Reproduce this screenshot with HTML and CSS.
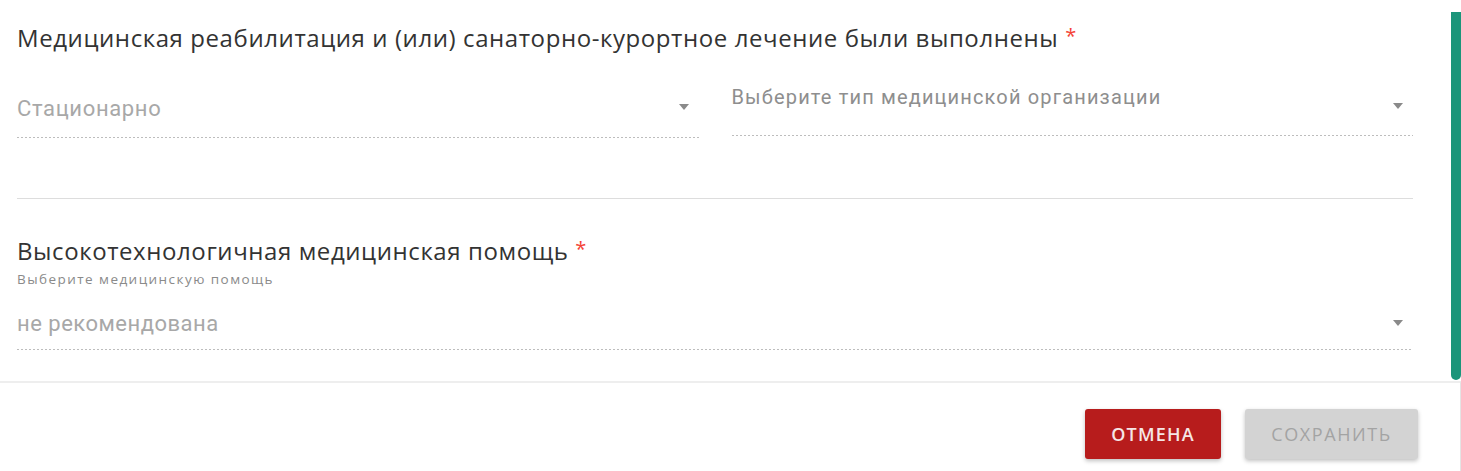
FILE: index.html
```html
<!DOCTYPE html>
<html lang="ru">
<head>
<meta charset="utf-8">
<link rel="stylesheet" href="styles.css">
</head>
<body>
<div class="scroll-area">
  <div class="content">
    <h2 class="title t1">Медицинская реабилитация и (или) санаторно-курортное лечение были выполнены <span class="req">*</span></h2>
    <div class="row">
      <div class="select s1">
        <span class="value">Стационарно</span>
        <span class="arrow"></span>
      </div>
      <div class="select s2">
        <span class="label">Выберите тип медицинской организации</span>
        <span class="arrow"></span>
      </div>
    </div>
    <div class="divider"></div>
    <h2 class="title t2">Высокотехнологичная медицинская помощь <span class="req">*</span></h2>
    <div class="hint">Выберите медицинскую помощь</div>
    <div class="select s3">
      <span class="value v3">не рекомендована</span>
      <span class="arrow"></span>
    </div>
  </div>
  <div class="scrollbar"><div class="thumb"></div></div>
</div>
<div class="footer">
  <button class="btn btn-cancel">ОТМЕНА</button>
  <button class="btn btn-save">СОХРАНИТЬ</button>
</div>
</body>
</html>
```
FILE: styles.css
```css
* { box-sizing: border-box; }
html, body { margin: 0; padding: 0; background: #fff; }
body { width: 1461px; height: 471px; overflow: hidden; font-family: "Open Sans", "Noto Sans", sans-serif; }

.scroll-area { height: 381px; display: flex; }
.content { flex: 1; padding: 0 38px 0 17px; }
.scrollbar { width: 10px; }
.thumb { margin-top: 12px; height: 368px; background: #1b957a; border-radius: 0 0 5px 5px; }

.title { margin: 0; font-weight: 400; font-size: 24px; line-height: 28px; color: #333; letter-spacing: 0.58px; }
.t1 { margin-top: 24px; }
.t2 { margin-top: 38px; }
.req { color: #f44336; letter-spacing: 0; font-size: 20px; vertical-align: top; line-height: 24px; }

.row { display: flex; gap: 33px; }
.select {
  position: relative; flex: 1;
  font-family: Roboto, "Liberation Sans", sans-serif;
  background-image: linear-gradient(to right, #bdbdbd 2px, transparent 2px);
  background-size: 4px 1px; background-repeat: repeat-x; background-position: left bottom;
}
.s1 { padding-top: 45px; height: 86px; }
.s2 { padding-top: 33px; height: 84px; }
.s3 { padding-top: 25px; height: 63px; }
.value { display: block; font-size: 22px; line-height: 24px; color: #a8a8a8; letter-spacing: 0.65px; }
.v3 { letter-spacing: 0.5px; }
.label { display: block; font-size: 20px; line-height: 24px; color: #8e8e8e; letter-spacing: 1.15px; }
.arrow { position: absolute; right: 10px; width: 0; height: 0; border-left: 5px solid transparent; border-right: 5px solid transparent; border-top: 6px solid #8a8a8a; }
.s1 .arrow { top: 52px; }
.s2 .arrow { top: 51px; }
.s3 .arrow { top: 33px; }

.divider { margin-top: 60px; border-top: 1px solid #ddd; }
.hint { margin-top: 6px; font-size: 13.5px; line-height: 16px; color: #8a8a8a; letter-spacing: 1.45px; }

.footer { height: 90px; border-top: 2px solid #eee; display: flex; justify-content: flex-end; gap: 24px; padding: 26px 42px 0 0; border-right: 1px solid #e4e4e4; }
.btn { height: 50px; border: none; border-radius: 3px; font-family: "Open Sans", "Noto Sans", sans-serif; font-size: 18px; padding: 0; box-shadow: 0 2px 4px rgba(0,0,0,0.25); }
.btn-cancel { width: 136px; background: #b71c1c; color: #f5e6e6; font-weight: 600; letter-spacing: 1.2px; }
.btn-save { width: 173px; background: #d3d3d3; color: #a3a3a3; font-weight: 400; letter-spacing: 1.6px; }
```
